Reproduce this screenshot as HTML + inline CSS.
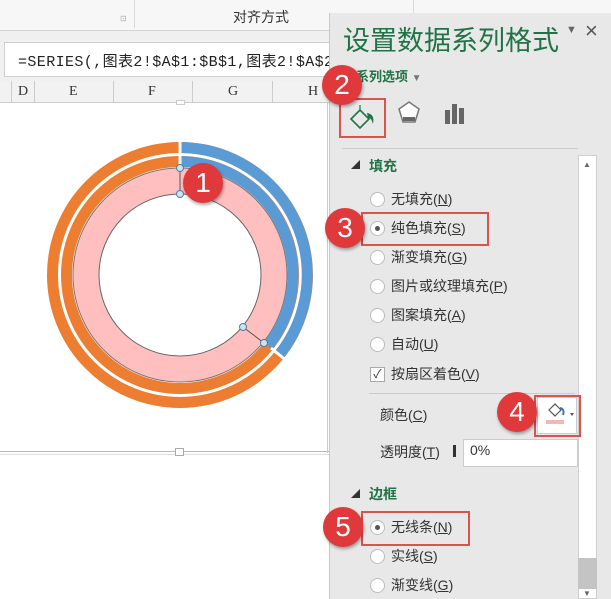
<!DOCTYPE html>
<html><head><meta charset="utf-8"><style>
*{margin:0;padding:0;box-sizing:border-box}
body{width:611px;height:599px;overflow:hidden;background:#fff;position:relative;font-family:"Liberation Sans","Noto Sans CJK SC",sans-serif;color:#333}
.a{position:absolute;white-space:nowrap}
.badge{position:absolute;width:40px;height:40px;border-radius:50%;background:#e0393c;color:#fff;font-size:28px;line-height:40px;text-align:center;box-shadow:1px 2px 3px rgba(0,0,0,.35);font-family:"Liberation Sans",sans-serif}
.rb{position:absolute;border:2px solid #d9534f}
.radio{position:absolute;width:15px;height:15px;border-radius:50%;background:#fff;border:1px solid #bbb}
.radio.on::after{content:"";position:absolute;left:4px;top:4px;width:5px;height:5px;border-radius:50%;background:#555}
.t{position:absolute;font-size:14px;color:#333;white-space:nowrap}
u{text-decoration:underline}
</style></head><body>
<div class="a" style="left:0;top:0;width:611px;height:31px;background:#f7f7f7;border-bottom:1px solid #d4d4d4"></div>
<div class="a" style="left:134px;top:0;width:1px;height:28px;background:#d8d8d8"></div>
<div class="a" style="left:413px;top:0;width:1px;height:28px;background:#d8d8d8"></div>
<div class="a" style="left:233px;top:7px;font-size:14px">对齐方式</div>
<div class="a" style="left:120px;top:14px;font-size:8px;color:#aaa">⊡</div>
<div class="a" style="left:0;top:31px;width:611px;height:50px;background:#f0f0f0"></div>
<div class="a" style="left:4px;top:42px;width:340px;height:35px;background:#fff;border:1px solid #d0d0d0"></div>
<div class="a" style="left:18px;top:50px;font-size:15px;letter-spacing:0.4px;font-family:'Liberation Mono','Noto Sans CJK SC',monospace;color:#222">=SERIES(,图表2!$A$1:$B$1,图表2!$A$2</div>
<div class="a" style="left:0;top:81px;width:330px;height:22px;background:#f2f2f2;border-bottom:1px solid #ccc"></div>
<div class="a" style="left:11px;top:81px;width:1px;height:22px;background:#ccc"></div>
<div class="a" style="left:34px;top:81px;width:1px;height:22px;background:#ccc"></div>
<div class="a" style="left:113px;top:81px;width:1px;height:22px;background:#ccc"></div>
<div class="a" style="left:192px;top:81px;width:1px;height:22px;background:#ccc"></div>
<div class="a" style="left:272px;top:81px;width:1px;height:22px;background:#ccc"></div>
<div class="a" style="left:18px;top:84px;font-size:14px;font-family:'Liberation Serif',serif">D</div>
<div class="a" style="left:69px;top:84px;font-size:14px;font-family:'Liberation Serif',serif">E</div>
<div class="a" style="left:148px;top:84px;font-size:14px;font-family:'Liberation Serif',serif">F</div>
<div class="a" style="left:228px;top:84px;font-size:14px;font-family:'Liberation Serif',serif">G</div>
<div class="a" style="left:308px;top:84px;font-size:14px;font-family:'Liberation Serif',serif">H</div>
<div class="a" style="left:0;top:451px;width:330px;height:1px;background:#bbb"></div>
<div class="a" style="left:0;top:454px;width:330px;height:1px;background:#ddd"></div>
<div class="a" style="left:175px;top:448px;width:9px;height:8px;background:#fff;border:1px solid #aaa"></div>
<div class="a" style="left:176px;top:100px;width:9px;height:5px;background:#fff;border:1px solid #ccc"></div>
<div class="a" style="left:327px;top:103px;width:1px;height:350px;background:#ccc"></div>
<svg class="a" style="left:0;top:0" width="330" height="460">
<g fill="none">
<circle cx="180" cy="275" r="127.5" stroke="#ed7d31" stroke-width="11"/>
<circle cx="180" cy="275" r="113.5" stroke="#ed7d31" stroke-width="11"/>
<path d="M180 147.5 A127.5 127.5 0 0 1 279 355" stroke="#5b9bd5" stroke-width="11"/>
<path d="M180 161.5 A113.5 113.5 0 0 1 268 346" stroke="#5b9bd5" stroke-width="11"/>
<line x1="180" y1="140" x2="180" y2="170" stroke="#fff" stroke-width="3"/>
<line x1="271" y1="348" x2="288" y2="362" stroke="#fff" stroke-width="3"/>
<circle cx="180" cy="275" r="94" stroke="#ffbfbf" stroke-width="26"/>
<circle cx="180" cy="275" r="107" stroke="#777" stroke-width="1"/>
<circle cx="180" cy="275" r="81" stroke="#666" stroke-width="1"/>
<line x1="180" y1="168" x2="180" y2="194" stroke="#555" stroke-width="1"/>
<line x1="243" y1="327" x2="264" y2="343" stroke="#555" stroke-width="1"/>
<g fill="#cfe3ef" stroke="#4a7fa0"><circle cx="180" cy="168" r="3.5"/><circle cx="180" cy="194" r="3.5"/><circle cx="243" cy="327" r="3.5"/><circle cx="264" cy="343" r="3.5"/></g>
</g></svg>
<div class="a" style="left:329px;top:13px;width:282px;height:586px;background:#e8e8e8;border-left:1px solid #c8c8c8"></div>
<div class="a" style="left:343px;top:19px;font-size:27px;color:#217346">设置数据系列格式</div>
<div class="a" style="left:566px;top:24px;font-size:11px;color:#666">▼</div>
<div class="a" style="left:585px;top:18px;font-size:22px;color:#555">×</div>
<div class="a" style="left:356px;top:66px;font-size:13px;font-weight:bold;color:#217346">系列选项 <span style="color:#777;font-size:10px">▼</span></div>
<div class="rb" style="left:339px;top:98px;width:47px;height:40px"></div>
<svg class="a" style="left:345px;top:102px" width="36" height="32"><path d="M6 17 L15 8 L24 17 L15 26 Z" fill="none" stroke="#217346" stroke-width="1.6"/><path d="M15 8 L15 3" stroke="#217346" stroke-width="1.2"/><path d="M22 11 Q30 12 28 22 Q26 15 23 16 Z" fill="#217346"/></svg>
<svg class="a" style="left:397px;top:100px" width="24" height="28"><path d="M12 2 L22 9 L18 22 L6 22 L2 9 Z" fill="#fff" stroke="#777" stroke-width="1.5"/><rect x="6" y="17" width="12" height="4" fill="#666"/></svg>
<svg class="a" style="left:444px;top:102px" width="24" height="24"><rect x="1" y="8" width="5" height="14" fill="#666"/><rect x="8" y="2" width="5" height="20" fill="#666"/><rect x="15" y="6" width="5" height="16" fill="#666"/></svg>
<div class="a" style="left:342px;top:148px;width:236px;height:1px;background:#ccc"></div>
<div class="a" style="left:351px;top:158px;font-size:9px;color:#333">◢</div>
<div class="a" style="left:369px;top:156px;font-size:14px;font-weight:bold;color:#217346">填充</div>
<div class="a" style="left:578px;top:155px;width:19px;height:444px;background:#fff;border:1px solid #d0d0d0"></div>
<div class="a" style="left:583px;top:160px;font-size:8px;color:#666">▲</div>
<div class="a" style="left:578px;top:558px;width:19px;height:31px;background:#c4c4c4"></div>
<div class="a" style="left:583px;top:589px;font-size:8px;color:#666">▼</div>
<div class="radio" style="left:370px;top:192px"></div><div class="t" style="left:391px;top:189px">无填充(<u>N</u>)</div>
<div class="radio on" style="left:370px;top:221px"></div><div class="t" style="left:391px;top:218px">纯色填充(<u>S</u>)</div>
<div class="radio" style="left:370px;top:250px"></div><div class="t" style="left:391px;top:247px">渐变填充(<u>G</u>)</div>
<div class="radio" style="left:370px;top:279px"></div><div class="t" style="left:391px;top:276px">图片或纹理填充(<u>P</u>)</div>
<div class="radio" style="left:370px;top:308px"></div><div class="t" style="left:391px;top:305px">图案填充(<u>A</u>)</div>
<div class="radio" style="left:370px;top:337px"></div><div class="t" style="left:391px;top:334px">自动(<u>U</u>)</div>
<div class="a" style="left:370px;top:367px;width:15px;height:15px;background:#fff;border:1px solid #aaa;font-size:12px;line-height:13px;text-align:center">✓</div><div class="t" style="left:391px;top:364px">按扇区着色(<u>V</u>)</div>
<div class="rb" style="left:361px;top:212px;width:128px;height:34px"></div>
<div class="a" style="left:369px;top:393px;width:206px;height:1px;background:#ccc"></div>
<div class="t" style="left:380px;top:405px">颜色(<u>C</u>)</div>
<div class="a" style="left:537px;top:397px;width:40px;height:37px;background:#fff;border:1px solid #ccc"></div>
<svg class="a" style="left:544px;top:400px" width="32" height="30"><path d="M5 10 L11 4 L17 10 L11 16 Z" fill="#fff" stroke="#555" stroke-width="1.2"/><path d="M16 8 Q21 9 19 15" fill="none" stroke="#3b78b5" stroke-width="2"/><rect x="2" y="20" width="18" height="4" fill="#f4b6b6"/><path d="M26 13 L30 13 L28 16 Z" fill="#555"/></svg>
<div class="rb" style="left:534px;top:395px;width:47px;height:42px"></div>
<div class="t" style="left:380px;top:442px">透明度(<u>T</u>)</div>
<div class="a" style="left:453px;top:445px;width:3px;height:12px;background:#333"></div>
<div class="a" style="left:463px;top:439px;width:115px;height:28px;background:#fff;border:1px solid #ccc"></div>
<div class="t" style="left:470px;top:442px">0%</div>
<div class="a" style="left:351px;top:487px;font-size:9px;color:#333">◢</div>
<div class="a" style="left:369px;top:484px;font-size:14px;font-weight:bold;color:#217346">边框</div>
<div class="radio on" style="left:370px;top:520px"></div><div class="t" style="left:391px;top:517px">无线条(<u>N</u>)</div>
<div class="radio" style="left:370px;top:549px"></div><div class="t" style="left:391px;top:546px">实线(<u>S</u>)</div>
<div class="radio" style="left:370px;top:578px"></div><div class="t" style="left:391px;top:575px">渐变线(<u>G</u>)</div>
<div class="rb" style="left:361px;top:511px;width:109px;height:35px"></div>
<div class="badge" style="left:183px;top:163px">1</div>
<div class="badge" style="left:322px;top:65px">2</div>
<div class="badge" style="left:325px;top:208px">3</div>
<div class="badge" style="left:497px;top:392px">4</div>
<div class="badge" style="left:323px;top:507px">5</div>
</body></html>
